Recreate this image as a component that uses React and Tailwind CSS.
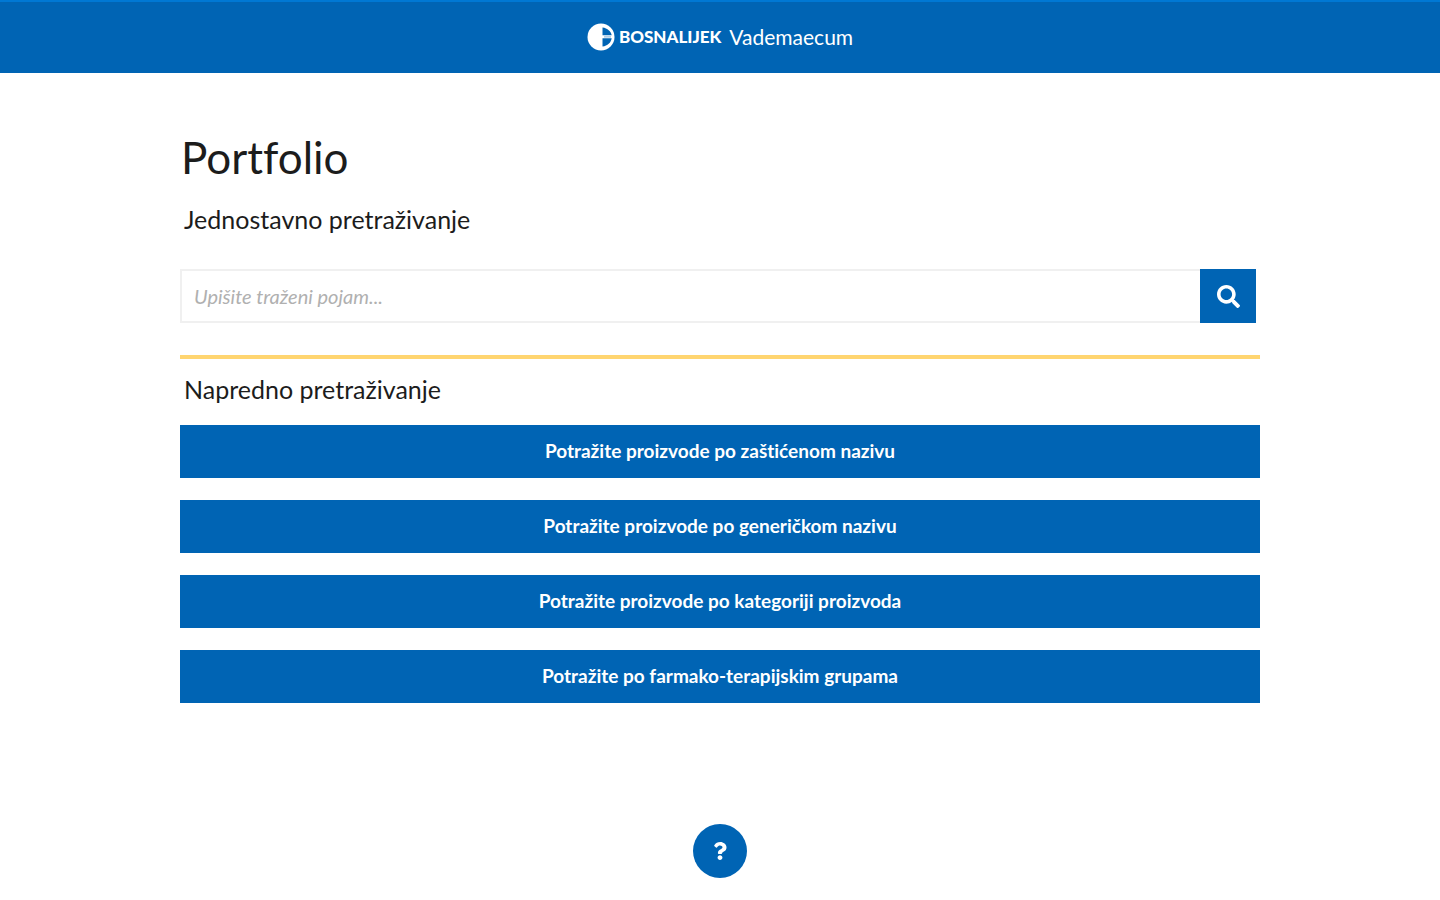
import React from "react";
import { FaSearch, FaQuestion } from "react-icons/fa";

const searches = [
  "Potražite proizvode po zaštićenom nazivu",
  "Potražite proizvode po generičkom nazivu",
  "Potražite proizvode po kategoriji proizvoda",
  "Potražite po farmako-terapijskim grupama",
];

function Logo() {
  return (
    <svg viewBox="0 0 28 28" className="size-7 shrink-0" aria-hidden="true">
      <circle cx="14" cy="14" r="13.5" fill="#fff" />
      <path d="M15.500 4.500c5 .5 8.500 4 9.200 7.800h-9.200z" fill="#0064b4" />
      <path d="M15.500 15.300h9.200c-.7 4.500-4.200 7.700-9.200 8.200z" fill="#0064b4" />
      <path d="M17 13.100h7v1.500h-7z" fill="#0064b4" opacity=".35" />
    </svg>
  );
}

export default function App() {
  return (
    <div className="min-h-screen bg-white font-['Lato',sans-serif] text-[#1c1c1c] [font-variant-ligatures:none]">
      <header className="border-t-2 border-[#0078d4] bg-[#0064b4] pt-[21px] pb-[22px] text-white">
        <a href="#" className="mx-auto flex w-fit items-center">
          <Logo />
          <span className="ml-1 text-[17px] leading-7 font-black">BOSNALIJEK</span>
          <span className="ml-2 text-[21px] leading-7">Vademaecum</span>
        </a>
      </header>

      <main className="mx-auto w-3/4 pt-[54px]">
        <h1 className="pl-px text-[44px] leading-[60px]">Portfolio</h1>
        <h2 className="mt-[14px] pl-1 text-[25px] leading-9">
          <label htmlFor="term">Jednostavno pretraživanje</label>
        </h2>

        <form className="mt-8 mr-1 flex h-[54px]" onSubmit={(e) => e.preventDefault()}>
          <input
            id="term"
            type="text"
            placeholder="Upišite traženi pojam..."
            className="min-w-0 flex-1 border-2 border-r-0 border-[#f0f0f0] px-3 text-[20px] outline-none placeholder:text-[#b0b0b0] placeholder:italic"
          />
          <button type="submit" aria-label="Pretraži" className="flex w-14 items-center justify-center bg-[#0064b4] text-white">
            <FaSearch className="size-[23px]" />
          </button>
        </form>

        <hr className="mt-8 border-t-4 border-[#ffd570]" />

        <h2 className="mt-3 pl-1 text-[25px] leading-9">Napredno pretraživanje</h2>
        <nav className="mt-[18px] flex flex-col gap-[22px]">
          {searches.map((label) => (
            <button key={label} type="button" className="h-[53px] w-full bg-[#0064b4] text-[19px] font-bold text-white">
              {label}
            </button>
          ))}
        </nav>

        <div className="flex justify-center pt-[121px] pb-5">
          <button type="button" aria-label="Pomoć" className="flex size-[54px] items-center justify-center rounded-full bg-[#0064b4] text-white">
            <FaQuestion className="size-[18px]" />
          </button>
        </div>
      </main>
    </div>
  );
}
